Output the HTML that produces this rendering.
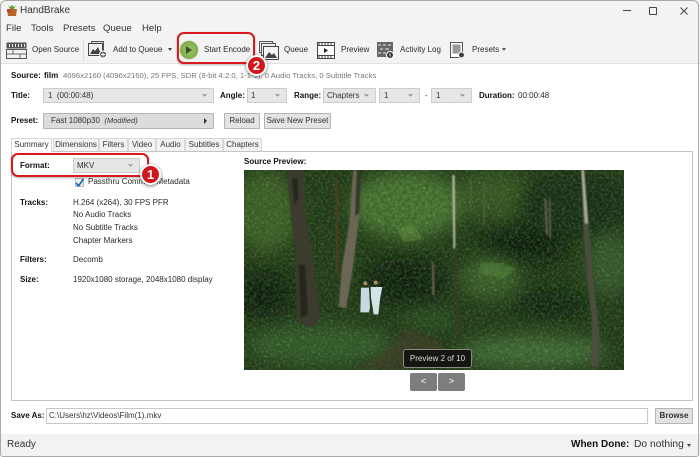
<!DOCTYPE html>
<html><head><meta charset="utf-8">
<style>
html,body{margin:0;padding:0;background:#fff}
#w{position:relative;width:700px;height:457px;overflow:hidden;background:#fff;font-family:"Liberation Sans",sans-serif;color:#222}
#w div,#w span.a{position:absolute;white-space:nowrap;box-sizing:border-box}
.t{font-size:8px;line-height:10px;color:#2a2a2a}
.b{font-weight:bold;color:#111}
.m{font-size:9.600px;line-height:12px;color:#333}
.dd{background:#e6e6e6;border:1px solid #cdcdcd;font-size:8px;line-height:13px;padding-left:4px;color:#333}
.dd:after{content:"";position:absolute;right:7px;top:4px;width:2px;height:2px;border-right:1px solid #888;border-bottom:1px solid #888;transform:rotate(45deg)}
.btn{background:#e4e4e4;border:1px solid #b4b4b4;font-size:8px;text-align:center;color:#333;border-radius:1px}
.tab{top:138px;height:13px;background:#f3f3f3;border:1px solid #d8d8d8;border-bottom:none;font-size:8px;line-height:12px;text-align:center;color:#333}
.badge{width:21px;height:21px;border-radius:50%;background:#d3161b;border:2px solid #fff;box-shadow:0 1px 3px rgba(0,0,0,.55);color:#fff;font-weight:bold;font-size:13px;line-height:17px;text-align:center}
.red{border:2px solid #d8191e;border-radius:7px;box-shadow:0 1px 2px rgba(0,0,0,.3)}
</style></head><body>
<div id="w">
<!-- window chrome -->
<div style="left:0;top:0;width:700px;height:64px;background:#f3f3f3"></div>
<div style="left:0;top:63px;width:700px;height:1px;background:#e2e2e2"></div>
<div style="left:0;top:434px;width:700px;height:22px;background:#f2f2f2"></div>
<div style="left:0;top:0;width:699px;height:457px;border:1px solid #a9a9a9;border-radius:6px 6px 3px 3px"></div>

<!-- title bar -->
<svg style="position:absolute;left:6px;top:4px" width="12" height="13" viewBox="0 0 12 13"><path d="M1 5h10l-1 7H2z" fill="#b5642a"/><path d="M2 1l2 4h4l2-4-2 2-2-2-2 2z" fill="#6d9a3a"/><rect x="1" y="5" width="3" height="3" fill="#c83c28"/></svg>
<div style="left:20px;top:5px;font-size:10px;line-height:12px;color:#333">HandBrake</div>
<div style="left:623px;top:10px;width:8px;height:1px;background:#444"></div>
<div style="left:649px;top:7px;width:8px;height:8px;border:1px solid #444;border-radius:1px"></div>
<svg style="position:absolute;left:679px;top:6px" width="10" height="10"><path d="M1.500 1.500l7 7M8.500 1.500l-7 7" stroke="#444" stroke-width="1"/></svg>

<!-- menu -->
<div class="m" style="left:6px;top:23px">File</div>
<div class="m" style="left:31px;top:23px">Tools</div>
<div class="m" style="left:63px;top:23px">Presets</div>
<div class="m" style="left:103px;top:23px">Queue</div>
<div class="m" style="left:142px;top:23px">Help</div>

<!-- toolbar -->
<svg style="position:absolute;left:6px;top:42px" width="21" height="18" viewBox="0 0 21 18"><rect x=".5" y=".5" width="20" height="6" fill="#555"/><path d="M3 2h1v3H3zM6 2h1v3H6zM9 2h1v3H9zM12 2h1v3h-1zM15 2h1v3h-1zM18 2h1v3h-1z" fill="#eee"/><rect x=".5" y="7.500" width="20" height="9" fill="#f2f2f2" stroke="#555"/><path d="M1 12h19M7 8v4M14 12v4" stroke="#666"/></svg>
<div class="t" style="left:32px;top:45px">Open Source</div>
<div style="left:83px;top:40px;width:1px;height:22px;background:#ddd"></div>
<svg style="position:absolute;left:88px;top:41px" width="20" height="18" viewBox="0 0 20 18"><rect x="3.500" y=".5" width="12" height="11" fill="#ddd" stroke="#555"/><rect x=".5" y="2.500" width="14" height="12" fill="#eee" stroke="#444"/><path d="M2 13l3-5 2 2 3-4 3 7z" fill="#444"/><circle cx="15" cy="13.500" r="3.500" fill="#555" stroke="#fff"/><path d="M15 11.500v4M13 13.500h4" stroke="#fff"/></svg>
<div class="t" style="left:113px;top:45px">Add to Queue</div>
<div style="left:168px;top:48px;border-left:2.500px solid transparent;border-right:2.500px solid transparent;border-top:3px solid #444"></div>
<div style="left:180px;top:41px;width:18px;height:18px;border-radius:50%;background:radial-gradient(circle,#9cc468,#74a33f);box-shadow:0 0 1px #5b8a30"></div>
<div style="left:186px;top:46px;border-left:6px solid #3f4f2a;border-top:4px solid transparent;border-bottom:4px solid transparent"></div>
<div class="t" style="left:204px;top:45px">Start Encode</div>
<svg style="position:absolute;left:259px;top:41px" width="20" height="20" viewBox="0 0 20 20"><rect x=".5" y=".5" width="13" height="11" fill="#eee" stroke="#555"/><rect x="2.500" y="2.500" width="14" height="12" fill="#eee" stroke="#555"/><rect x="4.500" y="5.500" width="15" height="13" fill="#f4f4f4" stroke="#444"/><path d="M6 17l4-6 3 3 2-2 3 5z" fill="#444"/></svg>
<div class="t" style="left:284px;top:45px">Queue</div>
<svg style="position:absolute;left:317px;top:42px" width="18" height="17" viewBox="0 0 18 17"><rect x=".5" y=".5" width="17" height="16" fill="#fff" stroke="#444"/><path d="M0 3.500h18M0 13.500h18" stroke="#444"/><path d="M2 1v2M5 1v2M8 1v2M11 1v2M14 1v2M2 14v2M5 14v2M8 14v2M11 14v2M14 14v2" stroke="#444"/><path d="M7 6l4 2.500-4 2.500z" fill="#222"/></svg>
<div class="t" style="left:341px;top:45px">Preview</div>
<svg style="position:absolute;left:377px;top:42px" width="17" height="17" viewBox="0 0 17 17"><rect width="16" height="15" fill="#666"/><path d="M1 2h3v2H1zM6 2h3v2H6zM11 2h3v2h-3zM3 6h3v2H3zM8 6h4v2H8zM1 10h3v2H1zM6 10h3v2H6z" fill="#aaa"/><circle cx="13" cy="13" r="3.500" fill="#333" stroke="#fff"/><rect x="12.500" y="11.500" width="1" height="3" fill="#fff"/></svg>
<div class="t" style="left:400px;top:45px">Activity Log</div>
<svg style="position:absolute;left:450px;top:42px" width="15" height="17" viewBox="0 0 15 17"><rect x=".5" y=".5" width="12" height="15" fill="#fff" stroke="#555"/><rect x="2.500" y="2.500" width="8" height="9" fill="#999"/><circle cx="11.500" cy="13" r="3" fill="#444" stroke="#fff"/></svg>
<div class="t" style="left:472px;top:45px">Presets</div>
<div style="left:502px;top:48px;border-left:2.500px solid transparent;border-right:2.500px solid transparent;border-top:3px solid #555"></div>

<!-- source -->
<div class="t b" style="left:11px;top:71px">Source:</div>
<div class="t b" style="left:44px;top:71px">film</div>
<div class="t" style="left:63px;top:71px;color:#777;font-size:7.700px">4096x2160 (4096x2160), 25 FPS, SDR (8-bit 4:2:0, 1-1-1), 0 Audio Tracks, 0 Subtitle Tracks</div>

<!-- title row -->
<div class="t b" style="left:11px;top:91px">Title:</div>
<div class="dd" style="left:43px;top:88px;width:171px;height:15px">1 &nbsp;(00:00:48)</div>
<div class="t b" style="left:220px;top:91px">Angle:</div>
<div class="dd" style="left:247px;top:88px;width:40px;height:15px;padding-left:3px">1</div>
<div class="t b" style="left:294px;top:91px">Range:</div>
<div class="dd" style="left:323px;top:88px;width:53px;height:15px;padding-left:3px">Chapters</div>
<div class="dd" style="left:379px;top:88px;width:41px;height:15px">1</div>
<div class="t" style="left:425px;top:91px">-</div>
<div class="dd" style="left:431px;top:88px;width:41px;height:15px">1</div>
<div class="t b" style="left:479px;top:91px">Duration:</div>
<div class="t" style="left:518px;top:91px">00:00:48</div>

<!-- preset row -->
<div class="t b" style="left:11px;top:116px">Preset:</div>
<div class="btn" style="left:43px;top:113px;width:171px;height:16px;text-align:left;padding-left:7px;line-height:14px;background:#dcdcdc">Fast 1080p30 &nbsp;<i style="font-size:7.500px">(Modified)</i></div>
<div style="left:204px;top:118px;border-left:3px solid #333;border-top:3px solid transparent;border-bottom:3px solid transparent"></div>
<div class="btn" style="left:224px;top:113px;width:36px;height:16px;line-height:14px">Reload</div>
<div class="btn" style="left:264px;top:113px;width:67px;height:16px;line-height:14px">Save New Preset</div>

<!-- tabs + panel -->
<div style="left:11px;top:151px;width:682px;height:250px;border:1px solid #c4c4c4;background:#fff"></div>
<div class="tab" style="left:11px;width:41px;height:14px;background:#fff;z-index:2">Summary</div>
<div class="tab" style="left:53px;width:46px">Dimensions</div>
<div class="tab" style="left:99px;width:29px">Filters</div>
<div class="tab" style="left:128px;width:28px">Video</div>
<div class="tab" style="left:156px;width:29px">Audio</div>
<div class="tab" style="left:185px;width:38px">Subtitles</div>
<div class="tab" style="left:223px;width:39px">Chapters</div>

<!-- summary -->
<div class="t b" style="left:20px;top:161px">Format:</div>
<div class="dd" style="left:73px;top:158px;width:67px;height:15px;padding-left:3px">MKV</div>
<div style="left:75px;top:178px;width:9px;height:9px;background:#eee;border:1px solid #bbb"></div>
<svg style="position:absolute;left:74px;top:177px" width="11" height="11"><path d="M2 6l2.500 3L9.500 2" fill="none" stroke="#0b62b8" stroke-width="1.600"/></svg>
<div class="t" style="left:88px;top:177px">Passthru Common Metadata</div>
<div class="t b" style="left:20px;top:198px">Tracks:</div>
<div class="t" style="left:73px;top:198px">H.264 (x264), 30 FPS PFR</div>
<div class="t" style="left:73px;top:210px">No Audio Tracks</div>
<div class="t" style="left:73px;top:223px">No Subtitle Tracks</div>
<div class="t" style="left:73px;top:236px">Chapter Markers</div>
<div class="t b" style="left:20px;top:255px">Filters:</div>
<div class="t" style="left:73px;top:255px">Decomb</div>
<div class="t b" style="left:20px;top:275px">Size:</div>
<div class="t" style="left:73px;top:275px">1920x1080 storage, 2048x1080 display</div>

<!-- preview -->
<div class="t b" style="left:244px;top:157px">Source Preview:</div>
<svg style="position:absolute;left:244px;top:170px" width="380" height="200" viewBox="12 15 1140 600" preserveAspectRatio="none">
<defs>
<filter id="bl" x="-20%" y="-20%" width="140%" height="140%"><feGaussianBlur stdDeviation="24"/></filter>
<filter id="bs" x="-20%" y="-20%" width="140%" height="140%"><feGaussianBlur stdDeviation="2.500"/></filter>
<filter id="bp" x="-20%" y="-20%" width="140%" height="140%"><feGaussianBlur stdDeviation="10"/></filter>
<filter id="n" x="0" y="0" width="100%" height="100%"><feTurbulence type="fractalNoise" baseFrequency=".14" numOctaves="2" seed="7"/><feColorMatrix values="0 0 0 0 .4  0 0 0 0 .66  0 0 0 0 .24  2.500 0 0 0 -1.150"/></filter>
<filter id="d" x="0" y="0" width="100%" height="100%"><feTurbulence type="fractalNoise" baseFrequency=".09" numOctaves="2" seed="21"/><feColorMatrix values="0 0 0 0 .03  0 0 0 0 .08  0 0 0 0 .02  2.500 0 0 0 -1"/></filter>
</defs>
<rect x="12" y="15" width="1140" height="600" fill="#203717"/>
<g filter="url(#bl)">
<ellipse cx="80" cy="140" rx="100" ry="120" fill="#3d6128"/>
<ellipse cx="500" cy="120" rx="170" ry="100" fill="#4a7432"/>
<ellipse cx="760" cy="90" rx="120" ry="70" fill="#345522"/>
<ellipse cx="1000" cy="120" rx="170" ry="100" fill="#182c12"/>
<ellipse cx="850" cy="240" rx="130" ry="60" fill="#0d1b0a"/>
<ellipse cx="1110" cy="300" rx="70" ry="90" fill="#34582e"/>
<ellipse cx="750" cy="340" rx="90" ry="60" fill="#3a602b"/>
<ellipse cx="500" cy="350" rx="130" ry="70" fill="#0f1d09"/>
<ellipse cx="70" cy="390" rx="90" ry="70" fill="#0f1d08"/>
<ellipse cx="930" cy="420" rx="110" ry="40" fill="#11230d"/>
<ellipse cx="240" cy="540" rx="220" ry="60" fill="#315a29"/>
<ellipse cx="880" cy="560" rx="220" ry="50" fill="#416a38"/>
<ellipse cx="570" cy="465" rx="80" ry="25" fill="#2b5123"/>
</g>
<rect x="12" y="15" width="1140" height="600" filter="url(#n)" opacity=".3"/>
<rect x="12" y="15" width="1140" height="600" filter="url(#d)" opacity=".6"/>
<path d="M370 600C430 570 470 540 490 495L530 500 610 535 560 590 490 615H350z" fill="#4c3f2d" opacity=".55" filter="url(#bp)"/>
<!-- trunks -->
<g filter="url(#bs)">
<path d="M140 15h52l6 150 24 130 18 160-8 25-30 8-30-28-4-180-16-130z" fill="#3a3b2f"/>
<path d="M155 40h18l2 60-12 20zM176 300h20l8 150-22 10z" fill="#25261c"/>
<path d="M340 15h23l-7 150-14 120-14 90-10 55-22-5 10-120 22-130z" fill="#6a6854"/>
<path d="M350 15h13l-6 130-12 10z" fill="#34352a"/>
<path d="M286 40h8l2 300-8-20z" fill="#4e3c24"/>
<path d="M1023 15h10l18 220 14 150 14 130-5 90h-22l4-130-14-130-12-150z" fill="#4c4e3d"/>
<path d="M1024 15h8l12 160-9 0z" fill="#aaaa96"/>
<path d="M637 30h7l2 220-6 0z" fill="#b8b7a6"/>
<path d="M641 250h5l14 290-7 0z" fill="#3a3828"/>
<path d="M913 100h6l5 110-6 0zM927 100h4l2 120-5 0z" fill="#636354"/>
<path d="M576 290h6l2 100h-8z" fill="#665d46"/>
<path d="M690 40h3v100h-3zM730 50h3v130h-3z" fill="#636352"/>
</g>
<!-- figures -->
<path d="M363 368h24l3 60-3 14h-26z" fill="#c6d9de"/>
<path d="M392 366h35l-6 30-6 52h-14l-8-50z" fill="#d2e2e7"/>
<circle cx="376" cy="355" r="6" fill="#a98f6a"/>
<circle cx="407" cy="353" r="6" fill="#a98f6a"/>
<path d="M720 292l60 3 50 15-40 30-70-15z" fill="#5f8f45" opacity=".4" filter="url(#bs)"/>
<path d="M470 190l50-8 30 40-60 10z" fill="#73a050" opacity=".35" filter="url(#bs)"/>
</svg>
<div style="left:403px;top:349px;width:69px;height:19px;background:#14160f;border:1px solid #8a8a80;border-radius:3px;color:#ddd;font-size:8px;line-height:17px;text-align:center">Preview 2 of 10</div>
<div style="left:410px;top:373px;width:27px;height:18px;background:#7d7d7d;border-radius:2px;color:#ddd;font-size:9px;line-height:17px;text-align:center;font-weight:bold">&lt;</div>
<div style="left:438px;top:373px;width:27px;height:18px;background:#7d7d7d;border-radius:2px;color:#ddd;font-size:9px;line-height:17px;text-align:center;font-weight:bold">&gt;</div>

<!-- save as -->
<div class="t b" style="left:11px;top:411px">Save As:</div>
<div style="left:46px;top:408px;width:602px;height:16px;border:1px solid #c8c8c8;background:#fff;font-size:8px;line-height:14px;padding-left:2px;color:#333">C:\Users\hz\Videos\Film(1).mkv</div>
<div class="btn" style="left:655px;top:408px;width:38px;height:16px;line-height:14px;font-weight:bold;background:#e2e2e2">Browse</div>

<!-- status -->
<div style="left:7px;top:439px;font-size:10px;line-height:12px;color:#333">Ready</div>
<div style="left:571px;top:439px;font-size:10px;line-height:12px;font-weight:bold;color:#111">When Done:</div>
<div style="left:634px;top:439px;font-size:10.300px;line-height:12px;color:#333">Do nothing</div>
<div style="left:687px;top:444px;border-left:2.500px solid transparent;border-right:2.500px solid transparent;border-top:3px solid #444"></div>

<!-- annotations -->
<div class="red" style="left:11px;top:153px;width:138px;height:24px"></div>
<div class="badge" style="left:140px;top:164px">1</div>
<div class="red" style="left:177px;top:32px;width:78px;height:32px"></div>
<div class="badge" style="left:246px;top:55px">2</div>
</div>
</body></html>
